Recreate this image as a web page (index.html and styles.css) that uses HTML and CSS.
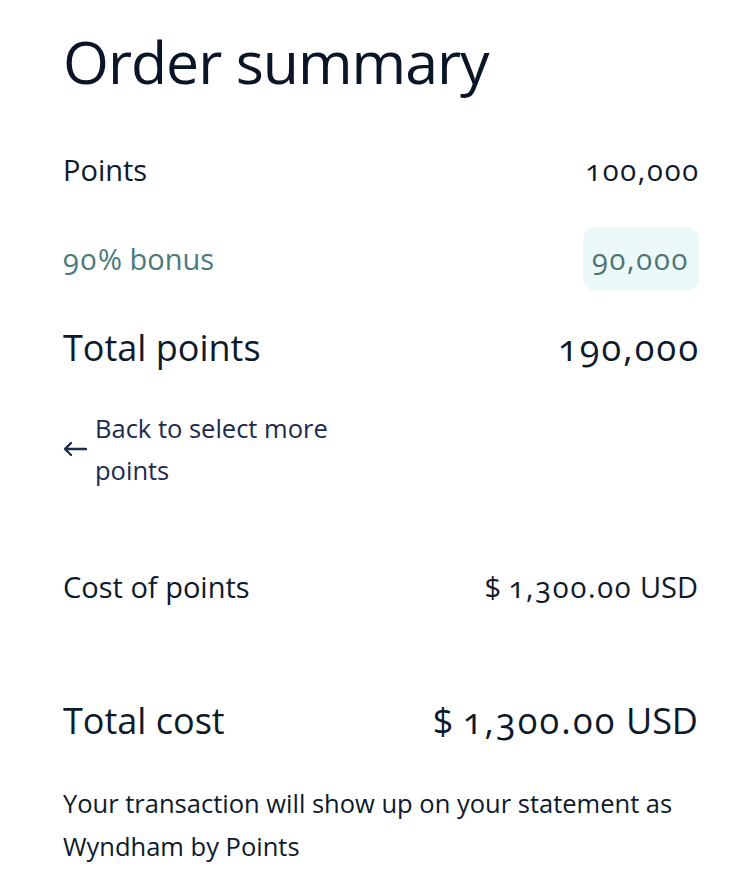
FILE: index.html
```html
<!DOCTYPE html>
<html lang="en">
<head>
<meta charset="utf-8">
<title>Order summary</title>
<link rel="stylesheet" href="styles.css">
</head>
<body>
<main class="summary">
  <h1 class="title">Order summary</h1>
  <div class="row">
    <span class="label">Points</span>
    <span class="num">100,000</span>
  </div>
  <div class="row bonus">
    <span class="label"><span class="digits">90</span>% bonus</span>
    <span class="num badge">90,000</span>
  </div>
  <div class="row total">
    <span class="label">Total points</span>
    <span class="num">190,000</span>
  </div>
  <a class="back" href="#">
    <svg class="arrow" width="24" height="14" viewBox="0 0 24 14" aria-hidden="true">
      <path d="M23 7H2M8 1L2 7L8 13" fill="none" stroke="currentColor" stroke-width="2.3" stroke-linecap="round" stroke-linejoin="round"/>
    </svg>
    <span class="back-text">Back to select more points</span>
  </a>
  <div class="row cost">
    <span class="label">Cost of points</span>
    <span class="amount">$ <span class="digits">1,300.00</span> USD</span>
  </div>
  <div class="row grand">
    <span class="label">Total cost</span>
    <span class="amount">$ <span class="digits">1,300.00</span> USD</span>
  </div>
  <p class="note">Your transaction will show up on your statement as Wyndham by Points</p>
</main>
</body>
</html>
```

FILE: styles.css
```css
html, body {
  margin: 0;
  padding: 0;
  background: #ffffff;
}

body {
  font-family: "Open Sans", "Noto Sans", "Liberation Sans", sans-serif;
  color: #0d1a2b;
}

.summary {
  padding: 21px 48px 20px 63px;
  display: flex;
  flex-direction: column;
}

.title {
  margin: 0;
  font-size: 59px;
  letter-spacing: -1px;
  line-height: 81px;
  font-weight: 400;
  color: #0a1628;
  height: 104px;
}

.row {
  display: flex;
  justify-content: space-between;
  align-items: center;
  height: 89px;
  font-size: 29px;
}

.num,
.digits {
  font-variant-numeric: oldstyle-nums;
  letter-spacing: 0.06em;
}

.num {
  margin-right: -0.06em;
}

.bonus {
  color: #4b7a7a;
}

.badge {
  display: inline-flex;
  align-items: center;
  height: 64px;
  padding: 0 10px 0 9px;
  margin-right: -1px;
  border-radius: 13px;
  background: #ebf9f8;
  color: #4f7474;
}

.total {
  font-size: 36px;
}

.back {
  display: flex;
  align-items: center;
  gap: 8px;
  margin-top: 15px;
  color: #1b2a4e;
  text-decoration: none;
  font-size: 25.5px;
  line-height: 42px;
}

.arrow {
  flex: none;
}

.back-text {
  width: 260px;
}

.cost {
  height: 40px;
  margin-top: 75px;
}

.grand {
  height: 50px;
  margin-top: 89px;
  font-size: 36px;
}

.note {
  margin: 37px 0 0;
  font-size: 25.5px;
  line-height: 43px;
}
```
